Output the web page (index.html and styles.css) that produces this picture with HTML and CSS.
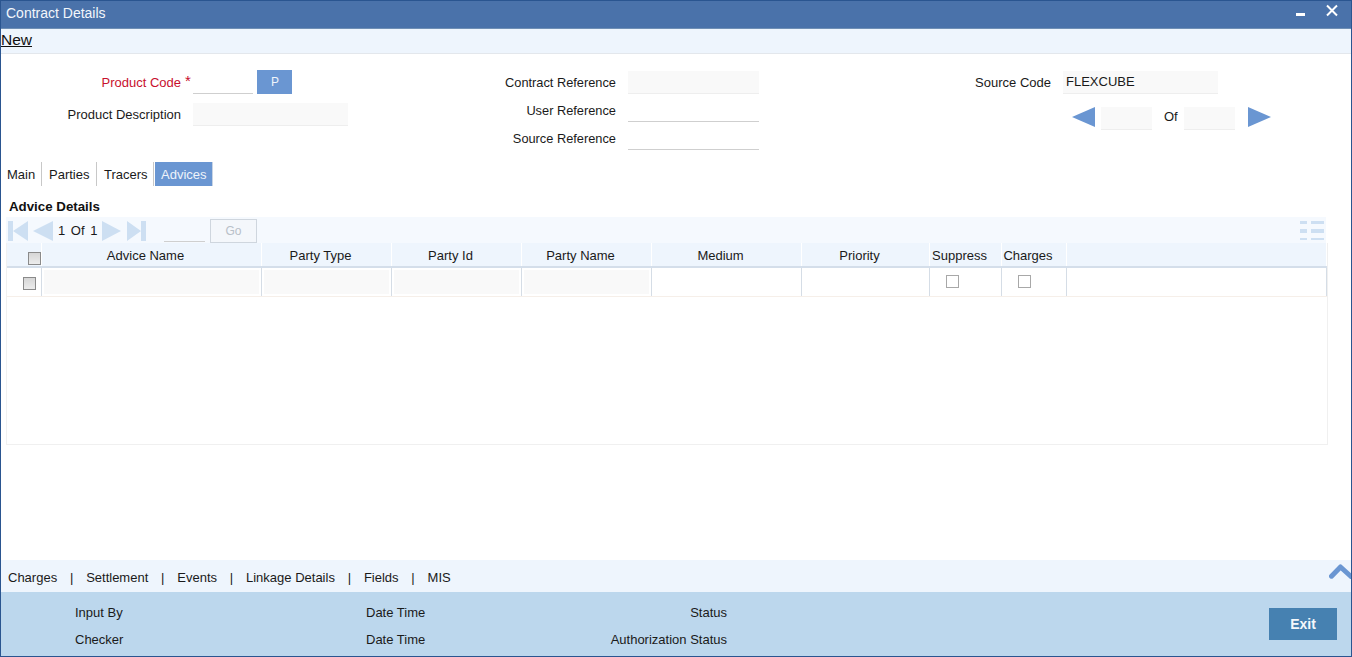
FILE: index.html
```html
<!DOCTYPE html>
<html lang="en">
<head>
<meta charset="utf-8">
<title>Contract Details</title>
<link rel="stylesheet" href="styles.css">
</head>
<body>
<div class="window">
  <header class="titlebar">
    <span class="title">Contract Details</span>
    <div class="win-controls">
      <svg class="win-icon" width="12" height="12" viewBox="0 0 12 12"><rect x="1" y="8" width="9" height="3" fill="#fff"/></svg>
      <svg class="win-icon win-x" width="14" height="14" viewBox="0 0 14 14"><path d="M2 1.5 L12 11.5 M12 1.5 L2 11.5" stroke="#fff" stroke-width="2" fill="none"/></svg>
    </div>
  </header>
  <div class="toolbar"><a class="new-link">New</a></div>

  <section class="form">
    <div class="col col-1">
      <div class="field">
        <label class="lbl lbl-1 req">Product Code<span class="star">*</span></label>
        <div class="inp inp-line w60"></div>
        <button class="p-btn">P</button>
      </div>
      <div class="field field-desc">
        <label class="lbl lbl-1">Product Description</label>
        <div class="inp inp-ro w155"></div>
      </div>
    </div>
    <div class="col col-2">
      <div class="field"><label class="lbl lbl-2">Contract Reference</label><div class="inp inp-ro w131"></div></div>
      <div class="field"><label class="lbl lbl-2">User Reference</label><div class="inp inp-line w131"></div></div>
      <div class="field"><label class="lbl lbl-2">Source Reference</label><div class="inp inp-line w131"></div></div>
    </div>
    <div class="col col-3">
      <div class="field"><label class="lbl lbl-3">Source Code</label><div class="inp inp-ro w155 val">FLEXCUBE</div></div>
      <div class="pager">
        <svg width="23" height="20" viewBox="0 0 23 20"><path d="M0 10 L23 0 V20 Z" fill="#6a96d2"/></svg>
        <div class="inp inp-ro w51"></div>
        <span class="of">Of</span>
        <div class="inp inp-ro w51"></div>
        <svg class="next" width="23" height="20" viewBox="0 0 23 20"><path d="M0 0 L23 10 L0 20 Z" fill="#6a96d2"/></svg>
      </div>
    </div>
  </section>

  <nav class="tabs">
    <span class="tab tab-first">Main</span>
    <span class="tab">Parties</span>
    <span class="tab">Tracers</span>
    <span class="tab active">Advices</span>
  </nav>

  <section class="details">
    <h2 class="heading">Advice Details</h2>
    <div class="grid-tools">
      <svg width="20" height="20" viewBox="0 0 20 20"><path d="M0 0 H5 V20 H0 Z M5 10 L20 0 V20 Z" fill="#cddff2"/></svg>
      <svg class="t-prev" width="20" height="20" viewBox="0 0 20 20"><path d="M0 10 L20 0 V20 Z" fill="#cddff2"/></svg>
      <span class="count">1 Of 1</span>
      <svg class="t-next" width="19" height="20" viewBox="0 0 19 20"><path d="M0 0 L19 10 L0 20 Z" fill="#cddff2"/></svg>
      <svg class="t-last" width="19" height="20" viewBox="0 0 19 20"><path d="M0 0 L14 10 L0 20 Z M14 0 H19 V20 H14 Z" fill="#cddff2"/></svg>
      <div class="goto"></div>
      <button class="go">Go</button>
      <svg class="list-icon" width="24" height="19" viewBox="0 0 24 19"><path d="M0 0 H7 V3 H0 Z M11 0 H24 V3 H11 Z M0 8 H7 V12 H0 Z M11 8 H24 V12 H11 Z M0 17 H7 V19 H0 Z M11 17 H24 V19 H11 Z" fill="#cddff2"/></svg>
    </div>
    <div class="grid">
      <div class="row head">
        <div class="c c-start"><span class="chk chk-grey chk-head"></span></div>
        <div class="c">Advice Name</div>
        <div class="c">Party Type</div>
        <div class="c">Party Id</div>
        <div class="c">Party Name</div>
        <div class="c">Medium</div>
        <div class="c">Priority</div>
        <div class="c">Suppress</div>
        <div class="c">Charges</div>
        <div class="c"></div>
      </div>
      <div class="row body">
        <div class="c c-start"><span class="chk chk-grey chk-row"></span></div>
        <div class="c"><div class="cell-ro"></div></div>
        <div class="c"><div class="cell-ro"></div></div>
        <div class="c"><div class="cell-ro"></div></div>
        <div class="c"><div class="cell-ro"></div></div>
        <div class="c"></div>
        <div class="c"></div>
        <div class="c c-start"><span class="chk chk-plain"></span></div>
        <div class="c c-start"><span class="chk chk-plain"></span></div>
        <div class="c"></div>
      </div>
    </div>
  </section>

  <div class="subsystems">
    <span>Charges</span><i>|</i><span>Settlement</span><i>|</i><span>Events</span><i>|</i><span>Linkage Details</span><i>|</i><span>Fields</span><i>|</i><span>MIS</span>
    <svg class="chevron" width="22" height="15" viewBox="0 0 22 15"><path d="M2.5 12.2 L11.5 3 L22 12.5" stroke="#6a96d2" stroke-width="5" stroke-linecap="round" stroke-linejoin="round" fill="none"/></svg>
  </div>
  <footer class="audit">
    <div class="audit-grid">
      <span class="a1">Input By</span><span class="a2">Date Time</span><span class="a3">Status</span>
      <span class="a1">Checker</span><span class="a2">Date Time</span><span class="a3">Authorization Status</span>
    </div>
    <button class="exit">Exit</button>
  </footer>
</div>
</body>
</html>
```
FILE: styles.css
```css
* { box-sizing: border-box; }
html, body { margin: 0; padding: 0; height: 100%; overflow: hidden; }
body { font-family: "Liberation Sans", Arial, sans-serif; font-size: 13px; color: #1a1a1a; background: #fff; }
button { font-family: inherit; font-size: 13px; border: 0; padding: 0; }

.window { width: 1352px; height: 657px; display: flex; flex-direction: column; border: 1px solid #2a5590; background: #fff; }

.titlebar { height: 28px; flex: none; background: #4a72aa; color: #f2f6fb; display: flex; align-items: center; justify-content: space-between; padding: 0 12px 3px 5px; border-bottom: 1px solid #6f8fb5; }
.title { font-size: 14px; }
.win-controls { display: flex; align-items: flex-start; gap: 18px; margin-top: -3px; }
.win-x { margin-top: -1px; }

.toolbar { height: 25px; flex: none; background: #eef5fd; border-bottom: 1px solid #e3e7ec; line-height: 22px; }
.new-link { font-size: 15.5px; color: #111; text-decoration: underline; }

.form { height: 108px; flex: none; display: flex; padding-top: 16px; }
.col { flex: none; display: flex; flex-direction: column; }
.col-1 { width: 460px; }
.col-2 { width: 460px; padding-top: 1px; gap: 5px; }
.col-3 { flex: 1; padding-top: 1px; }
.field { display: flex; align-items: center; gap: 12px; }
.field-desc { margin-top: 9px; }
.lbl { text-align: right; flex: none; white-space: nowrap; }
.lbl-1 { width: 180px; }
.lbl-2 { width: 155px; font-size: 12.8px; }
.lbl-3 { width: 130px; }
.req { color: #c8102e; position: relative; }
.star { position: absolute; left: 184px; top: -3px; font-size: 15px; }
.inp { height: 23px; flex: none; }
.inp-ro { background: #f9f9f9; border-bottom: 1px solid #eeeeee; }
.inp-line { background: #fff; border-bottom: 1px solid #cfcfcf; }
.w60 { width: 60px; }
.w155 { width: 155px; }
.w131 { width: 131px; }
.w51 { width: 51px; }
.val { padding-left: 3px; line-height: 22px; color: #1a1a1a; }
.p-btn { width: 35px; height: 24px; margin-left: -8px; padding-left: 1px; background: #6a96d2; color: #f0f5fb; font-size: 12px; }

.pager { display: flex; align-items: flex-start; margin: 13px 0 0 151px; }
.pager .inp { margin-left: 6px; }
.of { margin: 2px 0 0 12px; width: 26px; height: 20px; }
.pager .of + .inp { margin-left: -6px; }
.next { margin-left: 13px; }

.tabs { height: 24px; flex: none; display: flex; }
.tab { display: flex; align-items: center; height: 24px; padding: 0 6px 0 7px; border-right: 1px solid #c8c8c8; }
.tab-first { padding-left: 6px; width: 41px; }
.tab:nth-child(2) { width: 55px; }
.tab:nth-child(3) { width: 57px; }
.tab.active { background: #6a96d2; color: #eef3fa; margin-left: 1px; padding: 0 6px; width: 58px; border-right: 1px solid #c8d4e4; }

.details { flex: 1; padding: 0 0 0 5px; display: flex; flex-direction: column; min-height: 0; }
.heading { font-size: 13.3px; font-weight: bold; margin: 12px 0 0 3px; height: 19px; line-height: 17px; color: #111; }
.grid-tools { width: 1320px; height: 26px; flex: none; background: #f5f9fe; display: flex; align-items: center; padding: 1px 0 0 2px; }
.t-prev { margin-left: 5px; }
.count { margin-left: 5px; width: 44px; white-space: nowrap; word-spacing: 2px; }
.t-last { margin-left: 6px; }
.goto { width: 41px; height: 23px; margin-left: 18px; border-bottom: 1px solid #cfcfcf; }
.go { width: 47px; height: 24px; margin-left: 5px; background: #f4f7fb; border: 1px solid #cfd6de; color: #b8c0c8; font-size: 12px; }
.list-icon { margin-left: auto; margin-right: 2px; }

.grid { width: 1322px; height: 202px; flex: none; border: 1px solid #f0f0f0; border-top: 0; }
.row { display: grid; grid-template-columns: 35px 220px 130px 130px 130px 150px 128px 72px 65px 1fr; }
.c { display: flex; align-items: center; justify-content: center; border-right: 1px solid #d5dde6; }
.c-start { justify-content: flex-start; }
.head { height: 25px; background: #eef5fd; border-bottom: 2px solid #d4deea; }
.head .c { border-right: 1px solid #fff; padding: 2px 12px 0 0; }
.head .c-start { padding-right: 0; }
.body { height: 29px; border-bottom: 1px solid #f6efe9; }
.cell-ro { width: calc(100% - 4px); height: 24px; background: #f9f9f9; }
.chk { display: block; width: 13px; height: 13px; border: 1px solid #a8a8a8; background: #fff; }
.chk-grey { background: linear-gradient(#d6d6d6, #ececec); border-color: #8a8a8a; }
.chk-head { margin: 6px 0 0 21px; }
.chk-row { margin: 2px 0 0 16px; }
.chk-plain { margin: -2px 0 0 16px; }

.subsystems { height: 32px; flex: none; background: #eef5fd; display: flex; align-items: center; padding: 2px 0 0 7px; position: relative; }
.subsystems i { font-style: normal; margin: 0 12.8px; }
.chevron { position: absolute; right: 0; top: 4px; }

.audit { height: 64px; flex: none; background: #bcd7ed; display: flex; align-items: flex-start; justify-content: space-between; padding: 16px 14px 0 0; }
.audit-grid { display: grid; grid-template-columns: 365px 120px 241px; grid-auto-rows: 27px; align-items: start; margin-top: -3px; }
.audit-grid span { white-space: nowrap; }
.a1 { margin-left: 74px; }
.a3 { text-align: right; }
.exit { width: 68px; height: 32px; background: #4681b1; color: #f4f8fb; font-weight: bold; font-size: 14px; }
```
